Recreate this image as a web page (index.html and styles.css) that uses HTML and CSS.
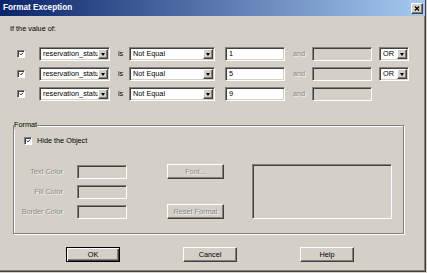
FILE: index.html
```html
<!DOCTYPE html>
<html>
  <head>
    <meta charset="UTF-8" />
    <title>Format Exception</title>
    <link rel="stylesheet" href="styles.css">
  </head>
  <body>
    <div class="window">
      <div class="titlebar">
        <span class="title">Format Exception</span>
        <span class="close">
          <svg viewBox="0 0 11 11" class="close-icon">
            <path d="M3 3 L8 8 M8 3 L3 8" stroke="#000" stroke-width="1.5"></path>
          </svg>
        </span>
      </div>

      <div class="content">
        <div class="intro">If the value of:</div>

        <div class="rows">
          <div class="row">
            <span class="check"><svg viewBox="0 0 8 8"><path d="M1.5 3.5 L3.2 5.3 L6.5 1.8" fill="none" stroke="#000" stroke-width="1.4"></path></svg></span>
            <span class="field select col-field"><span class="value">reservation_status</span><span class="drop"><i></i></span></span>
            <span class="word">is</span>
            <span class="field select col-op"><span class="value">Not Equal</span><span class="drop"><i></i></span></span>
            <span class="field col-val">1</span>
            <span class="word disabled">and</span>
            <span class="field off col-val"></span>
            <span class="field select col-join"><span class="value">OR</span><span class="drop"><i></i></span></span>
          </div>
          <div class="row">
            <span class="check"><svg viewBox="0 0 8 8"><path d="M1.5 3.5 L3.2 5.3 L6.5 1.8" fill="none" stroke="#000" stroke-width="1.4"></path></svg></span>
            <span class="field select col-field"><span class="value">reservation_status</span><span class="drop"><i></i></span></span>
            <span class="word">is</span>
            <span class="field select col-op"><span class="value">Not Equal</span><span class="drop"><i></i></span></span>
            <span class="field col-val">5</span>
            <span class="word disabled">and</span>
            <span class="field off col-val"></span>
            <span class="field select col-join"><span class="value">OR</span><span class="drop"><i></i></span></span>
          </div>
          <div class="row">
            <span class="check"><svg viewBox="0 0 8 8"><path d="M1.5 3.5 L3.2 5.3 L6.5 1.8" fill="none" stroke="#000" stroke-width="1.4"></path></svg></span>
            <span class="field select col-field"><span class="value">reservation_status</span><span class="drop"><i></i></span></span>
            <span class="word">is</span>
            <span class="field select col-op"><span class="value">Not Equal</span><span class="drop"><i></i></span></span>
            <span class="field col-val">9</span>
            <span class="word disabled">and</span>
            <span class="field off col-val"></span>
          </div>
        </div>

        <fieldset class="group">
          <legend>Format</legend>
          <div class="hide-row">
            <span class="check"><svg viewBox="0 0 8 8"><path d="M1.5 3.5 L3.2 5.3 L6.5 1.8" fill="none" stroke="#000" stroke-width="1.4"></path></svg></span>
            <span>Hide the Object</span>
          </div>
          <div class="format-grid">
            <span class="label disabled">Text Color</span>
            <span class="field off swatch"></span>
            <span class="btn disabled">Font...</span>
            <span class="preview"></span>
            <span class="label disabled">Fill Color</span>
            <span class="field off swatch"></span>
            <span></span>
            <span class="label disabled">Border Color</span>
            <span class="field off swatch"></span>
            <span class="btn disabled">Reset Format</span>
          </div>
        </fieldset>

        <div class="actions">
          <span class="btn default">OK</span>
          <span class="btn">Cancel</span>
          <span class="btn">Help</span>
        </div>
      </div>
    </div>
  </body>
</html>
```

FILE: styles.css
```css
:root {
  --face: #d4d0c8;
  --shadow: #808080;
  --dark: #404040;
  --light: #fff;
}

html,
body {
  margin: 0;
  background: var(--face);
}

body {
  font-family: "Liberation Sans", Arial, sans-serif;
  font-size: 7.3px;
  line-height: 10px;
  color: #000;
}

.window {
  width: 426px;
  height: 272px;
  box-sizing: border-box;
  border-right: 1px solid var(--dark);
  border-bottom: 1px solid var(--dark);
  box-shadow: inset -1px -1px var(--shadow);
  display: flex;
  flex-direction: column;
}

.titlebar {
  height: 16px;
  display: flex;
  align-items: center;
  justify-content: space-between;
  padding: 0 2px 0 3px;
  background: linear-gradient(to right, #0a246a, #a6caf0);
}

.title {
  color: #fff;
  font-weight: bold;
  font-size: 8.2px;
}

.close {
  width: 12px;
  height: 11px;
  box-sizing: border-box;
  background: var(--face);
  border: 1px solid;
  border-color: var(--light) var(--dark) var(--dark) var(--light);
  box-shadow: inset -1px -1px var(--shadow);
  display: flex;
}

.close-icon {
  width: 10px;
  height: 9px;
}

.content {
  padding-top: 8px;
}

.intro {
  padding-left: 10px;
}

/* condition rows */
.rows {
  margin-top: 13px;
  display: flex;
  flex-direction: column;
  gap: 6px;
  padding-left: 17px;
}

.row {
  display: flex;
  align-items: center;
  height: 14px;
}

.check {
  width: 8px;
  height: 8px;
  box-sizing: border-box;
  border: 1px solid;
  border-color: var(--shadow) var(--light) var(--light) var(--shadow);
  box-shadow: inset 1px 1px var(--dark);
  background: #fff;
  display: flex;
}

.check svg {
  width: 6px;
  height: 6px;
  margin-left: 1px;
}

.row .check {
  margin-right: 14px;
}

.field {
  height: 14px;
  box-sizing: border-box;
  border: 1px solid;
  border-color: var(--shadow) var(--light) var(--light) var(--shadow);
  box-shadow: inset 1px 1px var(--dark), inset -1px -1px var(--face);
  background: #fff;
  padding: 1px 1px 1px 3px;
  line-height: 10px;
  white-space: nowrap;
  overflow: hidden;
}

.field.off {
  background: var(--face);
}

.select {
  display: flex;
}

.select .value {
  flex: 1;
  overflow: hidden;
}

.drop {
  width: 10px;
  height: 10px;
  box-sizing: border-box;
  background: var(--face);
  border: 1px solid;
  border-color: var(--light) var(--dark) var(--dark) var(--light);
  box-shadow: inset -1px -1px var(--shadow);
  display: flex;
  align-items: center;
  justify-content: center;
}

.drop i {
  width: 0;
  height: 0;
  border-top: 3px solid #000;
  border-left: 2.5px solid transparent;
  border-right: 2.5px solid transparent;
}

.col-field {
  width: 71px;
}

.col-op {
  width: 86px;
  margin-right: 10px;
}

.col-val {
  width: 60px;
}

.col-join {
  width: 30px;
}

.row .off {
  margin-right: 7px;
}

.word {
  padding-left: 8px;
  width: 19px;
  box-sizing: border-box;
}

.word.disabled {
  width: 27px;
}

.disabled {
  color: #8a8a8a;
  text-shadow: 1px 1px 0 #f2f2f2;
}

/* format group */
.group {
  margin: 19px 0 0 13px;
  width: 391px;
  box-sizing: border-box;
  padding: 0 0 14px 0;
  border: 1px solid var(--shadow);
  box-shadow: inset 1px 1px var(--light), 1px 1px var(--light);
  min-width: 0;
}

.group legend {
  padding: 0;
  background: var(--face);
  line-height: 10px;
}

.hide-row {
  display: flex;
  align-items: center;
  gap: 5px;
  padding: 6px 0 0 10px;
}

.format-grid {
  margin-top: 18px;
  display: grid;
  grid-template-columns: 49px 64px 97px 168px;
  grid-template-rows: repeat(3, 15px);
  row-gap: 5px;
  align-items: center;
}

.label {
  text-align: right;
  white-space: nowrap;
}

.swatch {
  width: 50px;
  margin-left: 14px;
}

.format-grid .btn {
  margin-left: 40px;
}

.preview {
  grid-column: 4;
  grid-row: 1 / span 3;
  align-self: stretch;
  margin-left: 28px;
  box-sizing: border-box;
  border: 1px solid;
  border-color: var(--shadow) var(--light) var(--light) var(--shadow);
  box-shadow: inset 1px 1px var(--dark), inset -1px -1px var(--face);
}

/* buttons */
.btn {
  height: 15px;
  box-sizing: border-box;
  border: 1px solid;
  border-color: var(--light) var(--dark) var(--dark) var(--light);
  box-shadow: inset -1px -1px var(--shadow);
  background: var(--face);
  display: flex;
  align-items: center;
  justify-content: center;
  white-space: nowrap;
}

.btn.default {
  border-color: #000;
  box-shadow: inset 1px 1px var(--light), inset -1px -1px var(--dark), inset -2px -2px var(--shadow);
}

.actions {
  margin-top: 13px;
  display: flex;
  gap: 63px;
  padding-left: 66px;
}

.actions .btn {
  width: 54px;
}
```
